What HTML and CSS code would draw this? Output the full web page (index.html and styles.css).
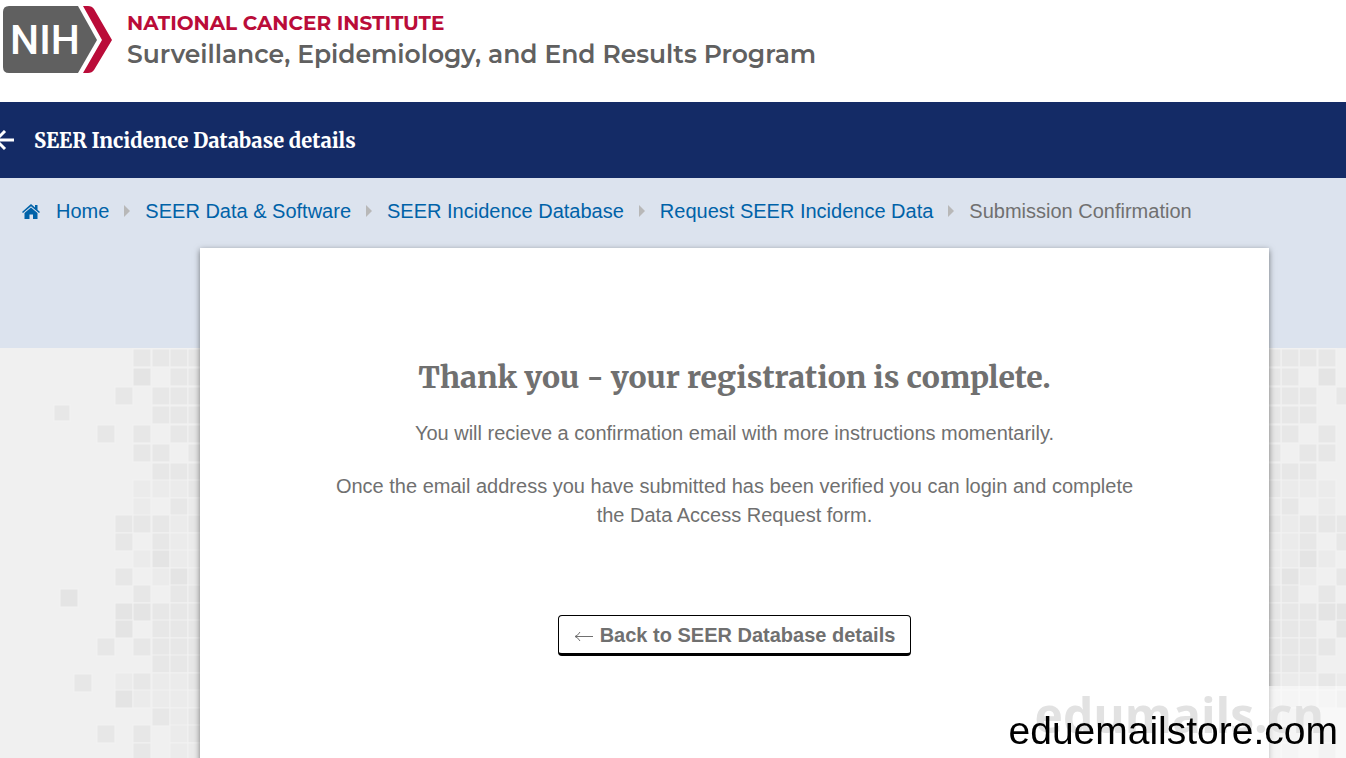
FILE: index.html
```
<!doctype html>
<html lang="en">
    <head>
        <meta charset="UTF-8" />
        <meta name="viewport" content="width=device-width, initial-scale=1.0" />
        <title>Submission Confirmation - SEER Incidence Database</title>
        <link rel="stylesheet" href="styles.css">
    </head>
    <body>
        <header class="header">
            <a href="#" class="brand">
                <svg class="brand-logo" viewBox="0 0 110 68" role="img" aria-label="NIH">
                    <path fill="#606060" d="M6 0H75L94 34 75 67H6Q0 67 0 61V6Q0 0 6 0z" />
                    <path fill="#ba0c39" d="M80 0H85Q89 0 91 3L109 34 91 64Q89 67 85 67H80L99 34z" />
                    <text class="brand-nih" x="42" y="48" text-anchor="middle">NIH</text>
                </svg>
                <span class="brand-text">
                    <span class="brand-institute">NATIONAL CANCER INSTITUTE</span>
                    <span class="brand-program">Surveillance, Epidemiology, and End Results Program</span>
                </span>
            </a>
        </header>

        <nav class="section-bar">
            <a href="#">
                <svg class="back-icon" viewBox="0 0 20 20" aria-hidden="true">
                    <path d="M20 10H3M11 1L2 10l9 9" />
                </svg>
                SEER Incidence Database details
            </a>
        </nav>

        <main class="main">
            <nav aria-label="Breadcrumb">
                <ol class="breadcrumb">
                    <li>
                        <a href="#">
                            <svg class="home-icon" viewBox="0 0 18 15" aria-hidden="true">
                                <path d="M9 0l4 3.500V1h2.500v4.700L18 8l-1 1-8-6.800L1 9 0 8z" />
                                <path d="M9 3.500l6.500 5.500v6H11v-4.500H7.500V15H2.500V9z" />
                            </svg>
                            Home
                        </a>
                    </li>
                    <li><a href="#">SEER Data &amp; Software</a></li>
                    <li><a href="#">SEER Incidence Database</a></li>
                    <li><a href="#">Request SEER Incidence Data</a></li>
                    <li aria-current="page">Submission Confirmation</li>
                </ol>
            </nav>

            <div class="card-wrap">
                <svg class="mosaic mosaic-left" width="200" height="510" aria-hidden="true">
                    <g id="mosaic"></g>
                </svg>
                <svg class="mosaic mosaic-right" width="200" height="510" aria-hidden="true">
                    <use href="#mosaic" transform="translate(200) scale(-1 1)" />
                </svg>

                <section class="card">
                    <h1>Thank you - your registration is complete.</h1>
                    <p>You will recieve a confirmation email with more instructions momentarily.</p>
                    <p>Once the email address you have submitted has been verified you can login and complete the Data Access Request form.</p>
                    <a href="#" class="button">
                        <svg class="arrow-icon" viewBox="0 0 20 12" aria-hidden="true">
                            <path d="M19 6.500H1M6 2Q4 5.500 1 6.500q3 1 5 4.500" />
                        </svg>
                        Back to SEER Database details
                    </a>
                </section>
            </div>
        </main>

        <div class="watermark">
            <span class="watermark-back">edumails.cn</span>
            <span class="watermark-front">eduemailstore.com</span>
        </div>

        <script src="mosaic.js"></script>
    </body>
</html>
```
FILE: styles.css
```
* {
    margin: 0;
    padding: 0;
    box-sizing: border-box;
}

body {
    display: flex;
    flex-direction: column;
    height: 100vh;
    overflow: hidden;
    font-family: "Liberation Sans", Arial, sans-serif;
    font-size: 20px;
    line-height: 29px;
    color: #707070;
    background: white;
}

a {
    color: #0062a8;
    text-decoration: none;
}

.header {
    height: 102px;
    flex-shrink: 0;
    padding: 6px 3px;
}

.brand {
    display: flex;
    gap: 14px;
}

.brand-logo {
    width: 110px;
    height: 68px;
}

.brand-nih {
    font: 500 41px Roboto, sans-serif;
    fill: white;
}

.brand-text {
    display: flex;
    flex-direction: column;
    padding-top: 2px;
    font-family: Montserrat, Inter, sans-serif;
    font-weight: bold;
    white-space: nowrap;
}

.brand-institute {
    font-size: 20px;
    line-height: 30px;
    color: #ba0c39;
}

.brand-program {
    font-size: 25px;
    font-weight: 600;
    line-height: 32px;
    color: #606060;
}

.section-bar {
    height: 76px;
    flex-shrink: 0;
    display: flex;
    align-items: center;
    background: #142b66;
    font-family: Merriweather, "DejaVu Serif Condensed", "DejaVu Serif", serif;
    font-size: 20px;
    font-weight: 800;
}

.section-bar a {
    display: flex;
    align-items: center;
    gap: 20px;
    margin-left: -6px;
    color: white;
}

.back-icon {
    width: 20px;
    height: 20px;
    fill: none;
    stroke: white;
    stroke-width: 3;
}

.main {
    flex: 1;
    overflow: hidden;
    background: linear-gradient(#dce3ee 170px, #f0f0f0 170px);
}

.breadcrumb {
    display: flex;
    height: 70px;
    padding: 16px 22px 20px;
    list-style: none;
    white-space: nowrap;
}

.breadcrumb li,
.breadcrumb a {
    display: flex;
    align-items: center;
}

.breadcrumb li + li::before {
    content: "";
    margin: 0 15px;
    border: 6px solid transparent;
    border-left-color: #b8b8b8;
    border-right: 0;
}

.home-icon {
    width: 18px;
    height: 15px;
    margin-right: 16px;
    fill: #0062a8;
}

.card-wrap {
    position: relative;
    margin: 0 77px 0 200px;
}

.mosaic {
    position: absolute;
    top: 100px;
}

.mosaic-left {
    right: 100%;
}

.mosaic-right {
    left: 100%;
}

.mosaic rect {
    stroke: #f2f2f2;
}

.card {
    position: relative;
    display: flex;
    flex-direction: column;
    align-items: center;
    gap: 24px;
    padding: 111px 120px;
    background: white;
    box-shadow: 0 2px 6px rgba(0, 0, 0, 0.5);
    text-align: center;
}

.card h1 {
    font-family: Merriweather, "DejaVu Serif Condensed", "DejaVu Serif", serif;
    font-size: 30px;
    font-weight: 800;
    line-height: 36px;
}

.button {
    display: flex;
    align-items: center;
    gap: 6px;
    height: 41px;
    margin-top: 61px;
    padding: 2px 15px 0;
    border: 1px solid black;
    border-bottom-width: 3px;
    border-radius: 4px;
    color: #707070;
    font-weight: bold;
}

.arrow-icon {
    width: 20px;
    height: 12px;
    fill: none;
    stroke: #707070;
}

.watermark {
    position: fixed;
    right: 0;
    bottom: 0;
    display: grid;
    height: 72px;
    padding-right: 8px;
    background: rgba(255, 255, 255, 0.5);
    white-space: nowrap;
}

.watermark span {
    grid-area: 1 / 1;
    justify-self: end;
}

.watermark-back {
    margin-right: 14px;
    font: bold 48px/58px "Open Sans", sans-serif;
    color: #e2e2e2;
}

.watermark-front {
    align-self: end;
    font-size: 39px;
    line-height: 54px;
    color: black;
}
```
FILE: mosaic.js
```
// one string per row, one digit per column: 0 is empty, 1-3 are shades
const columns = [97, 115, 133, 152, 170, 188];
const shades = ["", "#ebebeb", "#e7e7e7", "#e4e4e4"];
const rows = [
    "002222", "003022", "020222", "000222", "202022", "002202",
    "000222", "001112", "001021", "022212", "020211", "001311",
    "020131", "002022", "033222", "030222", "202222", "000222",
    "012112", "031111", "000212", "202012", "002011",
];

const mosaic = document.getElementById("mosaic");

function addSquare(x, y, size, shade) {
    const rect = document.createElementNS("http://www.w3.org/2000/svg", "rect");
    rect.setAttribute("x", x);
    rect.setAttribute("y", y);
    rect.setAttribute("width", size);
    rect.setAttribute("height", size);
    rect.setAttribute("fill", shades[shade]);
    mosaic.appendChild(rect);
}

let y = 1;
rows.forEach((row, i) => {
    [...row].forEach((shade, j) => {
        if (shade !== "0") addSquare(columns[j], y, 18, shade);
    });
    // the top rows sit a little further apart
    y += i < 6 ? 19 : i % 2 ? 18 : 17;
});

addSquare(54, 57, 16, 2);
addSquare(60, 241, 18, 3);
addSquare(74, 326, 18, 2);
```
